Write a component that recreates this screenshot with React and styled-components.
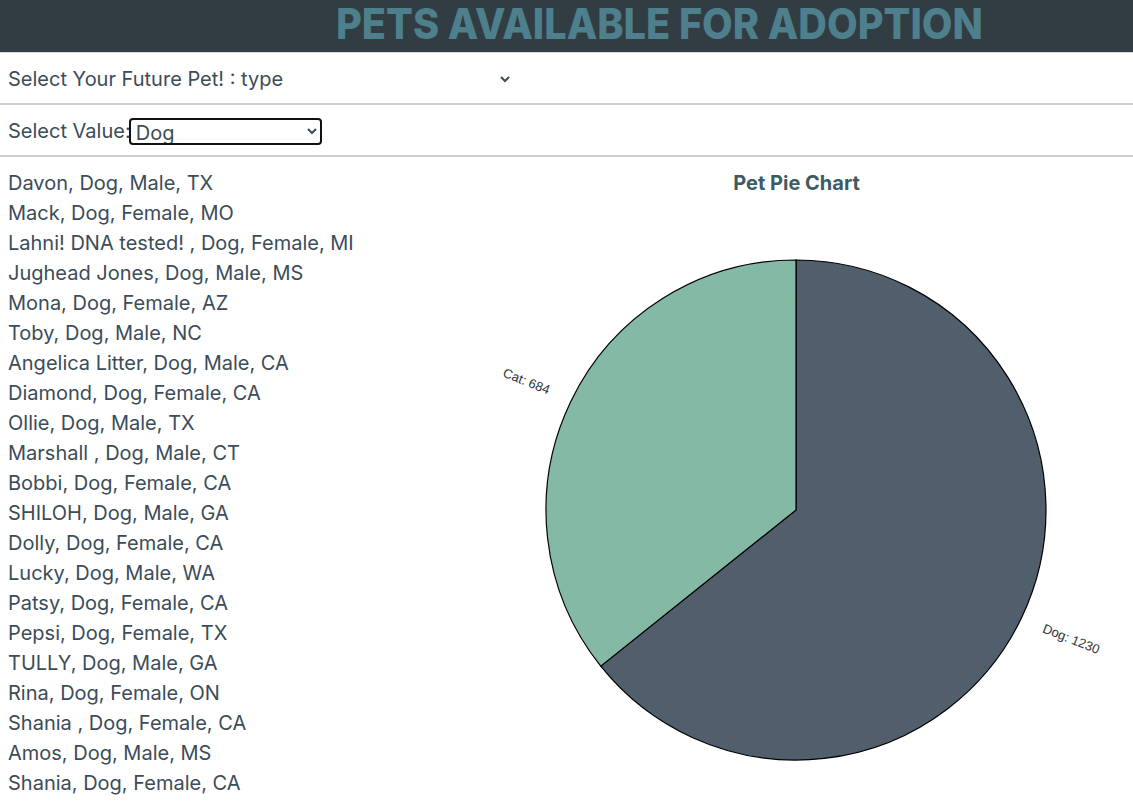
import React from "react";
import styled, { createGlobalStyle } from "styled-components";

const pets = [
  "Davon, Dog, Male, TX",
  "Mack, Dog, Female, MO",
  "Lahni! DNA tested! , Dog, Female, MI",
  "Jughead Jones, Dog, Male, MS",
  "Mona, Dog, Female, AZ",
  "Toby, Dog, Male, NC",
  "Angelica Litter, Dog, Male, CA",
  "Diamond, Dog, Female, CA",
  "Ollie, Dog, Male, TX",
  "Marshall , Dog, Male, CT",
  "Bobbi, Dog, Female, CA",
  "SHILOH, Dog, Male, GA",
  "Dolly, Dog, Female, CA",
  "Lucky, Dog, Male, WA",
  "Patsy, Dog, Female, CA",
  "Pepsi, Dog, Female, TX",
  "TULLY, Dog, Male, GA",
  "Rina, Dog, Female, ON",
  "Shania , Dog, Female, CA",
  "Amos, Dog, Male, MS",
  "Shania, Dog, Female, CA",
];

const slices = [
  { label: "Dog", value: 1230, color: "#515e6b" },
  { label: "Cat", value: 684, color: "#84b9a6" },
];

function App() {
  return (
    <>
      <GlobalStyle />
      <Header>
        <Title>PETS AVAILABLE FOR ADOPTION</Title>
      </Header>
      <FilterRow>
        <TypeSelect defaultValue="type">
          <option value="type">Select Your Future Pet! : type</option>
          <option value="gender">Select Your Future Pet! : gender</option>
          <option value="state">Select Your Future Pet! : state</option>
        </TypeSelect>
      </FilterRow>
      <FilterRow>
        <Label>Select Value:</Label>
        <ValueSelect defaultValue="Dog">
          <option>Dog</option>
          <option>Cat</option>
        </ValueSelect>
      </FilterRow>
      <Main>
        <PetList>
          {pets.map((p, i) => (
            <li key={i}>{p}</li>
          ))}
        </PetList>
        <ChartPanel>
          <ChartTitle>Pet Pie Chart</ChartTitle>
          <PieChart data={slices} />
        </ChartPanel>
      </Main>
    </>
  );
}

function PieChart({ data }) {
  const cx = 336;
  const cy = 302;
  const r = 250;
  const total = data.reduce((s, d) => s + d.value, 0);
  let start = 0;
  const pt = (deg, rad) => {
    const a = (deg * Math.PI) / 180;
    return [cx + rad * Math.sin(a), cy - rad * Math.cos(a)];
  };
  return (
    <svg width="673" height="597">
      {data.map((d) => {
        const sweep = (d.value / total) * 360;
        const end = start + sweep;
        const [x1, y1] = pt(start, r);
        const [x2, y2] = pt(end, r);
        const mid = start + sweep / 2;
        const [lx, ly] = pt(mid, r + 24);
        const right = mid < 180;
        const rot = (right ? mid - 90 : mid - 270) - 4;
        start = end;
        return (
          <g key={d.label}>
            <path
              d={`M${cx},${cy} L${x1},${y1} A${r},${r} 0 ${sweep > 180 ? 1 : 0} 1 ${x2},${y2} Z`}
              fill={d.color}
              stroke="#000"
              strokeWidth="1.2"
            />
            <text
              x={lx}
              y={ly}
              fontSize="13"
              fill="#333"
              fontFamily="'Liberation Sans', Arial, sans-serif"
              textAnchor={right ? "start" : "end"}
              dominantBaseline="middle"
              transform={`rotate(${rot} ${lx} ${ly})`}
            >
              {d.label}: {d.value}
            </text>
          </g>
        );
      })}
    </svg>
  );
}

export default App;

const GlobalStyle = createGlobalStyle`
  body {
    margin: 0;
    font-family: Inter, "Noto Sans", sans-serif;
    color: #3c4c58;
    background: #fff;
    overflow: hidden;
  }
`;

const Header = styled.header`
  height: 52px;
  background: #323d43;
  padding-left: 336px;
  display: flex;
  align-items: center;
  border-bottom: 1px solid #d8d8d8;
`;

const Title = styled.h1`
  margin: 0;
  font-family: Inter, sans-serif;
  font-weight: 800;
  font-size: 42px;
  line-height: 46px;
  color: #4e7f8c;
  white-space: nowrap;
  transform-origin: left center;
  transform: translateY(-2px) scaleX(0.945);
`;

const FilterRow = styled.div`
  height: 52px;
  box-sizing: border-box;
  display: flex;
  align-items: center;
  padding: 2px 0 0 8px;
  border-bottom: 2px solid #cfcfcf;
`;

const TypeSelect = styled.select`
  width: 509px;
  height: 40px;
  margin-left: -4px;
  border: none;
  background: #fff;
  font-family: Inter, sans-serif;
  font-size: 20px;
  color: #3c4c58;
  padding: 0;
  outline: none;
`;

const Label = styled.span`
  font-size: 20px;
`;

const ValueSelect = styled.select`
  width: 193px;
  height: 27px;
  margin-left: -2px;
  border: 2px solid #111;
  border-radius: 4px;
  background: #fff;
  font-family: Inter, sans-serif;
  font-size: 20px;
  color: #3c4c58;
  padding: 0 1px;
`;

const Main = styled.main`
  display: flex;
`;

const PetList = styled.ul`
  list-style: none;
  margin: 0;
  padding: 11px 0 0 8px;
  width: 452px;
  font-size: 20px;
  line-height: 30px;
`;

const ChartPanel = styled.section`
  flex: 1;
  display: flex;
  flex-direction: column;
`;

const ChartTitle = styled.h2`
  margin: 0;
  height: 51px;
  padding-top: 1px;
  box-sizing: border-box;
  line-height: 50px;
  text-align: center;
  font-size: 20px;
  font-weight: 700;
  color: #3d5b63;
`;
